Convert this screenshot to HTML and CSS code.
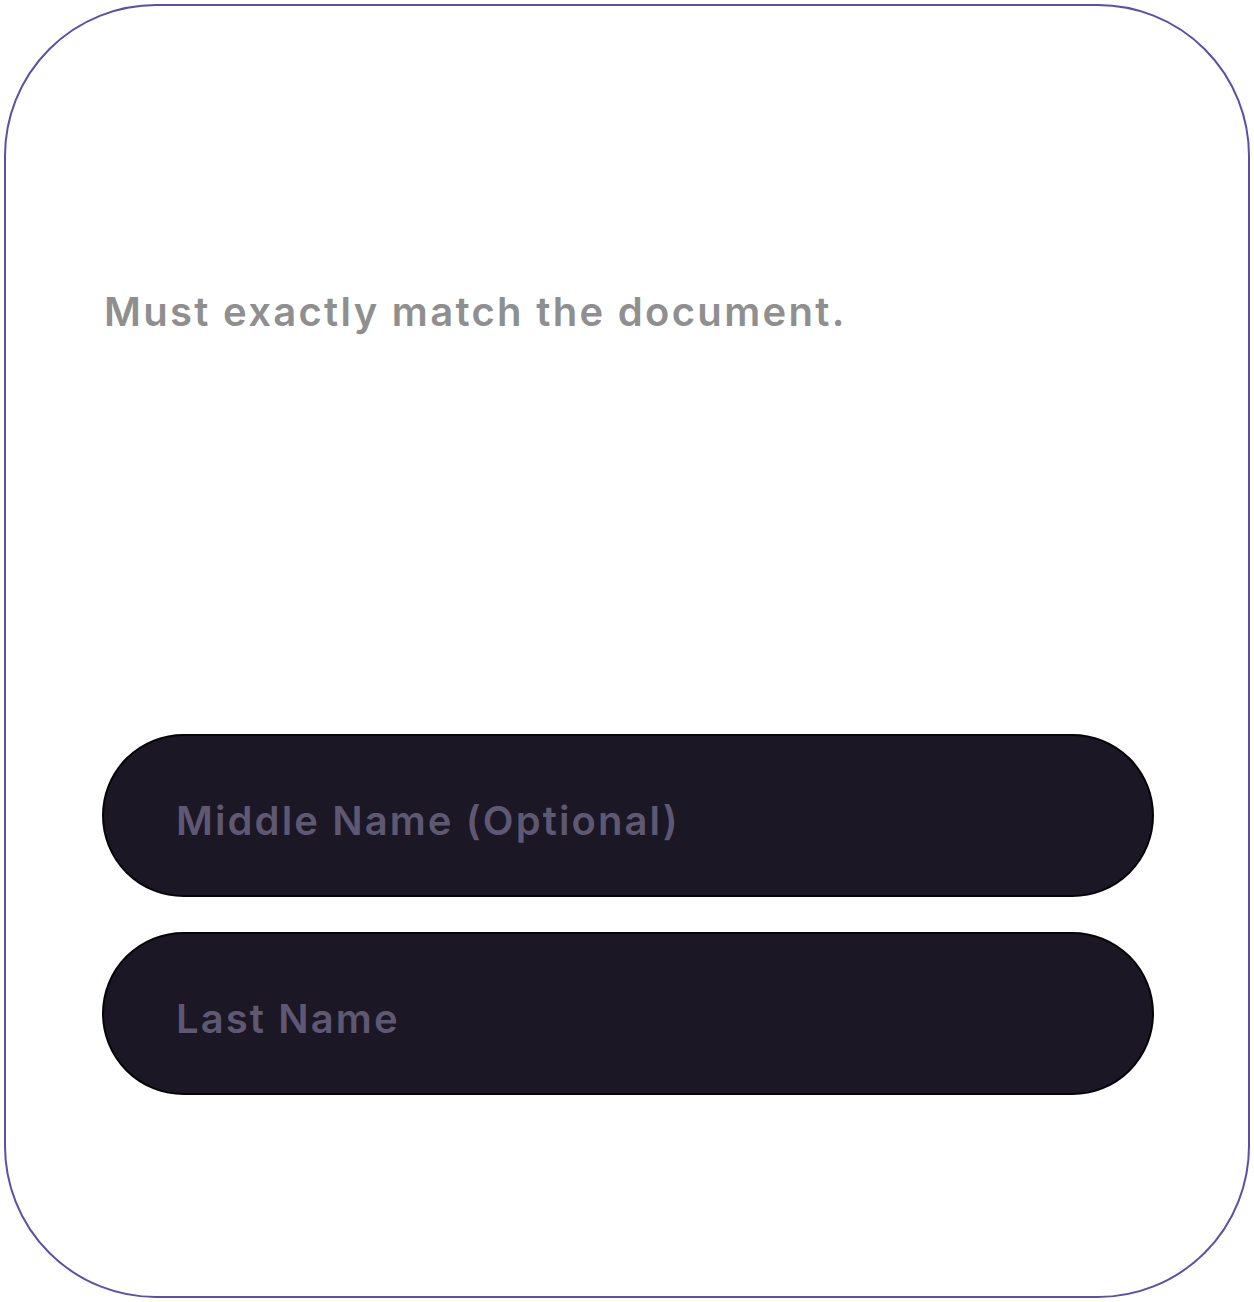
FILE: index.html
```html
<!DOCTYPE html>
<html>
<head>
<meta charset="utf-8">
<link rel="stylesheet" href="styles.css">
</head>
<body>
<div class="card">
  <p class="hint">Must exactly match the document.</p>
  <div class="fields">
    <div class="field"><span class="placeholder">Middle Name (Optional)</span></div>
    <div class="field"><span class="placeholder">Last Name</span></div>
  </div>
</div>
</body>
</html>
```
FILE: styles.css
```css
html, body {
  margin: 0;
  padding: 0;
  background: #ffffff;
}
body {
  padding: 4px;
  font-family: Inter, "Noto Sans", sans-serif;
}
.card {
  box-sizing: border-box;
  width: 1246px;
  height: 1294px;
  border: 2px solid #5b50a8;
  border-radius: 152px;
  padding: 0 94px 0 96px;
  display: flex;
  flex-direction: column;
}
.hint {
  margin: 278px 0 0 2px;
  font-size: 40px;
  font-weight: 600;
  line-height: 56px;
  color: #8f8f8f;
  letter-spacing: 2.3px;
}
.fields {
  margin-top: 394px;
  display: flex;
  flex-direction: column;
  gap: 35px;
}
.field {
  box-sizing: border-box;
  height: 163px;
  background: #1b1724;
  border: 2px solid #050407;
  border-radius: 82px;
  display: flex;
  align-items: center;
  padding-left: 72px;
}
.placeholder {
  font-size: 40px;
  font-weight: 600;
  color: #5f5873;
  letter-spacing: 2.1px;
  padding-top: 10px;
}
```
